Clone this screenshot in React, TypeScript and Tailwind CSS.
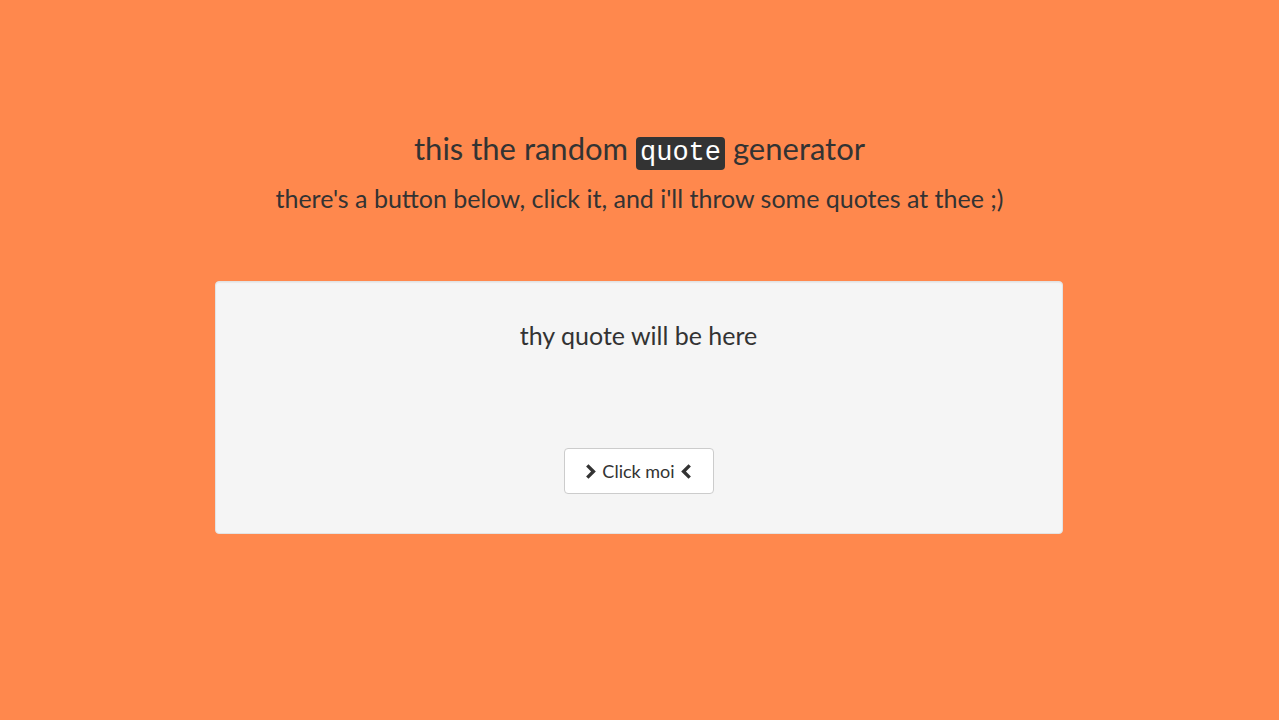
const FONT = { fontFamily: "Lato, 'Noto Sans', sans-serif" };

// bold filled chevron, points right unless flipped
function Chevron({ flip = false }: { flip?: boolean }) {
  return (
    <svg
      viewBox="0 0 12 16"
      className={`h-[15px] w-[11px] ${flip ? "-scale-x-100" : ""}`}
      fill="#333333"
    >
      <path d="M1.2 2.6 L3.8 0 L11.8 8 L3.8 16 L1.2 13.4 L6.6 8 Z" />
    </svg>
  );
}

export default function App() {
  return (
    <div className="min-h-screen bg-[#ff884d] text-[#333333]" style={FONT}>
      <header className="pt-[131px] text-center">
        <h1 className="text-[31px] leading-[34px]">
          this the random{" "}
          <code className="inline-block rounded bg-[#333333] px-1 font-['Liberation_Mono','Courier_New',monospace] text-[27px] leading-[33px] text-white">
            quote
          </code>{" "}
          generator
        </h1>
        <p className="mt-[14px] text-[25px] leading-[28px]">
          there's a button below, click it, and i'll throw some quotes at thee ;)
        </p>
      </header>

      <main className="mx-auto mt-[69px] flex w-[848px] -translate-x-px flex-col items-center rounded border border-[#e3e3e3] bg-[#f5f5f5] px-[19px] pt-[40px] pb-[39px] shadow-[inset_0_1px_1px_rgba(0,0,0,0.05)]">
        <p className="text-[25px] leading-[26px]">thy quote will be here</p>
        <button className="mt-[100px] flex h-[46px] w-[150px] items-center justify-center gap-1.5 rounded border border-[#cccccc] bg-white text-[18px] text-[#333333]">
          <Chevron />
          Click moi
          <Chevron flip />
        </button>
      </main>
    </div>
  );
}
